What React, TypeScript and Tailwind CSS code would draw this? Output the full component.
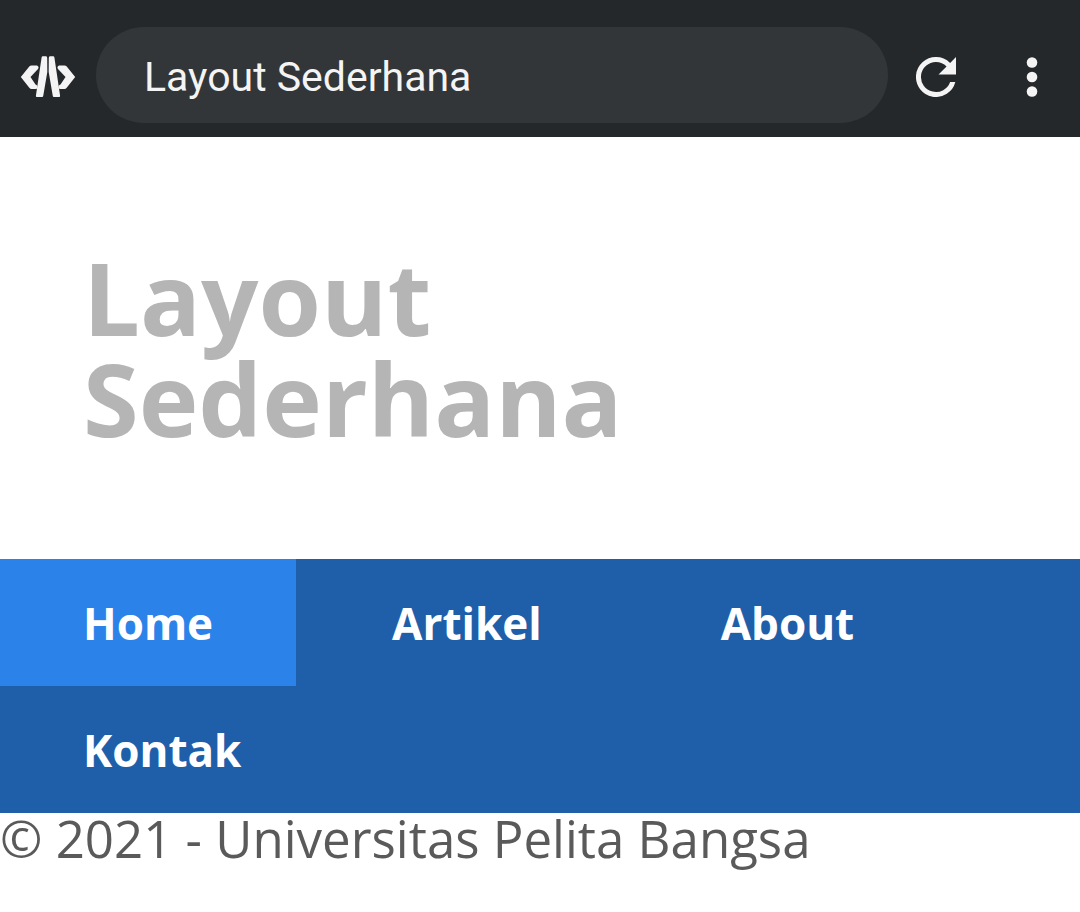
import React from "react";

const links = ["Home", "Artikel", "About", "Kontak"];

function CodeLogo() {
  return (
    <svg viewBox="0 0 56 44" className="h-11 w-14 shrink-0" fill="#f4f4f4" aria-hidden="true">
      <path d="M0.8 22 L9.5 11.2 Q10.3 10.4 11.5 10.4 H17 Q19.500 11.5 18 14 L10.500 22 L15.500 29.500 Q19 31 16.500 34 H11.500 Q10.300 34 9.500 33 Z" />
      <path d="M55.2 22 L46.500 11.200 Q45.700 10.400 44.500 10.400 H39 Q36.500 11.500 38 14 L45.500 22 L40.500 29.500 Q37 31 39.500 34 H44.500 Q45.700 34 46.500 33 Z" />
      <path d="M22.8 1.200 H26.200 Q27 1.200 27.200 3 L27.300 17 L23.300 40.500 Q23.200 42 22 42 H16.800 Q15.800 42 15.900 40.800 L21.600 2.500 Q21.800 1.200 22.800 1.200 Z" />
      <path d="M33.200 1.200 H29.800 Q29 1.200 28.800 3 L28.700 17 L32.700 40.500 Q32.800 42 34 42 H39.200 Q40.200 42 40.100 40.800 L34.400 2.500 Q34.200 1.200 33.200 1.200 Z" />
    </svg>
  );
}

export default function App() {
  return (
    <div className="min-h-screen bg-white font-['Open_Sans',sans-serif]">
      <header className="flex h-[137px] items-center bg-[#24282b] pt-[17px] pr-4 pl-5 font-['Roboto',sans-serif]">
        <CodeLogo />
        <input
          aria-label="Page title"
          readOnly
          value="Layout Sederhana"
          className="mb-1 ml-5 h-24 min-w-0 flex-1 rounded-full bg-[#323639] px-12 pt-1 text-[41px] text-[#f4f4f4] outline-none"
        />
        <button aria-label="Reload" className="ml-4 flex size-16 items-center justify-center">
          <svg viewBox="4 4 16 16" className="size-10" fill="#f4f4f4">
            <path d="M17.65 6.35A7.96 7.96 0 0 0 12 4a8 8 0 1 0 7.73 10h-2.08A6 6 0 1 1 12 6c1.66 0 3.14.69 4.22 1.78L13 11h7V4z" />
          </svg>
        </button>
        <button aria-label="More options" className="ml-8 flex size-16 items-center justify-center">
          <svg viewBox="0 0 12 40" className="h-10 w-3" fill="#f4f4f4">
            <circle cx="6" cy="5.5" r="5.3" />
            <circle cx="6" cy="20" r="5.3" />
            <circle cx="6" cy="34.5" r="5.3" />
          </svg>
        </button>
      </header>
      <h1 className="px-[83px] pt-[110px] pb-[110px] text-[101px] leading-[101px] font-bold text-[#b5b5b5]">
        Layout<br />Sederhana
      </h1>
      <nav className="flex flex-wrap gap-x-[13px] bg-[#1f5faa]">
        {links.map((label, i) => (
          <a
            key={label}
            href="#"
            className={
              i === 0
                ? "bg-[#2b83ea] px-[83px] pt-[33px] pb-[31px] text-[44px] leading-[63px] font-bold text-white"
                : "px-[83px] pt-[33px] pb-[31px] text-[44px] leading-[63px] font-bold text-white"
            }
          >
            {label}
          </a>
        ))}
      </nav>
      <footer className="text-[51px] leading-[50px] text-[#5a5a5a]">© 2021 - Universitas Pelita Bangsa</footer>
    </div>
  );
}
